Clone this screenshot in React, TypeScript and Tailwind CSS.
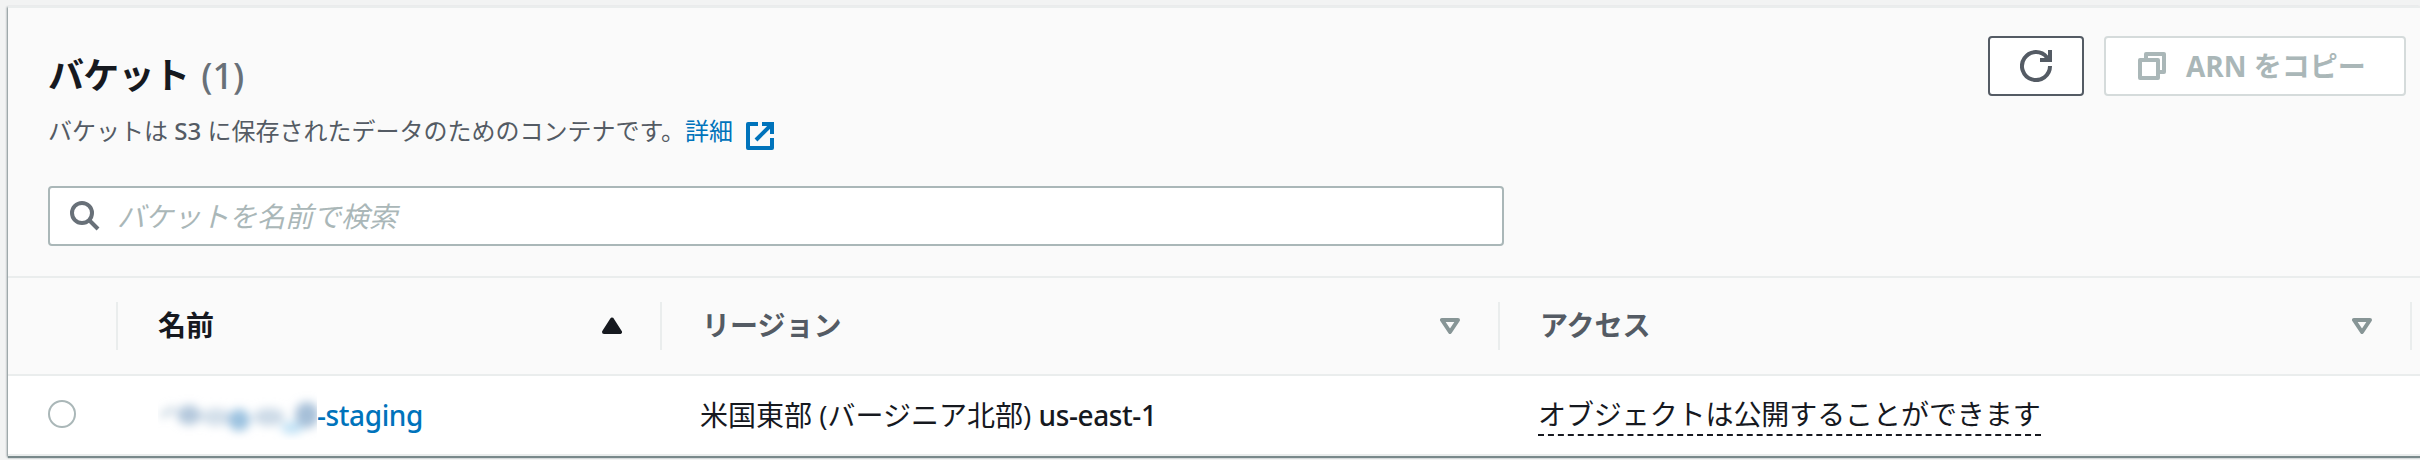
const FONT = "font-['Open_Sans','Noto_Sans_CJK_JP',sans-serif]";

function RefreshIcon() {
  return (
    <svg width="32" height="32" viewBox="0 0 32 32" fill="none" stroke="#545b64" strokeWidth="4">
      <path d="M30 16A14 14 0 1 1 27 7.4L29 10" />
      <path d="M20 10H30V0" />
    </svg>
  );
}

function CopyIcon() {
  return (
    <svg width="28" height="28" viewBox="0 0 28 28" fill="none" stroke="#aab7b8" strokeWidth="4" strokeLinejoin="round">
      <path d="M2 8H20V26H2Z" />
      <path d="M8 6V2H26V20H21" />
    </svg>
  );
}

function ExternalIcon() {
  return (
    <svg width="28" height="28" viewBox="0 0 28 28" fill="none" stroke="#0073bb" strokeWidth="4">
      <path d="M12 2H2V26H26V16" strokeLinejoin="round" />
      <path d="M16 2H26V12" />
      <path d="M10 18L25 3" />
    </svg>
  );
}

function SearchIcon() {
  return (
    <svg width="30" height="30" viewBox="0 0 30 30" fill="none" stroke="#687078" strokeWidth="4">
      <circle cx="12" cy="12" r="10" />
      <path d="M19 19L28 28" />
    </svg>
  );
}

function SortAsc() {
  return (
    <svg width="20" height="20" viewBox="0 0 20 20">
      <path d="M10 3.5L18 16H2Z" fill="#16191f" stroke="#16191f" strokeWidth="4" strokeLinejoin="round" />
    </svg>
  );
}

function SortNone() {
  return (
    <svg width="20" height="16" viewBox="0 0 20 16">
      <path d="M2 2H18L10 14Z" fill="none" stroke="#879596" strokeWidth="4" strokeLinejoin="round" />
    </svg>
  );
}

function HiddenName() {
  return (
    <svg width="159" height="50" viewBox="0 0 159 50">
      <defs>
        <filter id="soft" x="-20%" y="-50%" width="140%" height="200%">
          <feGaussianBlur stdDeviation="5" />
        </filter>
      </defs>
      <g filter="url(#soft)">
        <path d="M3 26L17 18" stroke="#c3d2df" strokeWidth="5" />
        <ellipse cx="31" cy="25" rx="12" ry="10" fill="#b4c8dc" />
        <ellipse cx="58" cy="27" rx="15" ry="9" fill="#d3dfea" />
        <ellipse cx="81" cy="30" rx="11" ry="11" fill="#9cc2e0" />
        <ellipse cx="111" cy="27" rx="16" ry="9" fill="#ccdae7" />
        <ellipse cx="134" cy="38" rx="11" ry="6" fill="#bfe1f5" />
        <ellipse cx="149" cy="25" rx="12" ry="13" fill="#a6bfd8" />
      </g>
    </svg>
  );
}

export default function App() {
  return (
    <div className={`flex h-[460px] w-[2420px] flex-col overflow-hidden bg-[#f2f3f3] pt-[6px] pl-2 text-[28px] text-[#16191f] ${FONT}`}>
      <main className="flex h-[450px] flex-col border-y-2 border-[#eaeded] bg-white shadow-[0_2px_1px_0_#79898b,-1px_1px_2px_0_rgba(0,28,36,0.45)]">
        <header className="flex h-[268px] shrink-0 justify-between bg-[#fafafa] pl-10">
          <div className="flex flex-col">
            <h1 className="mt-[43px] flex h-[50px] items-center gap-[12px] text-[36px] leading-[50px] font-bold">
              <span className="tracking-[-0.7px]">バケット</span>
              <span className="font-['Noto_Sans'] text-[36px] font-medium text-[#687078]">(1)</span>
            </h1>
            <p className="mt-[12px] flex h-[36px] items-center text-[24px] leading-[36px] whitespace-pre text-[#545b64]">
              <span>バケットは <span className="font-['Noto_Sans'] font-medium">S3</span> に保存されたデータのためのコンテナです。</span>
              <a className="text-[#0073bb]">詳細</a>
              <span className="mt-[9px] ml-[13px]"><ExternalIcon /></span>
            </p>
            <div className="mt-[37px] flex h-[60px] w-[1456px] items-center rounded-[4px] border-2 border-[#aab7b8] bg-white pl-5">
              <SearchIcon />
              <span className="ml-[17px] leading-[40px] text-[#aab7b8] italic">バケットを名前で検索</span>
            </div>
          </div>
          <div className="flex gap-5 pt-7 pr-[14px]">
            <button className="flex h-[60px] w-24 items-center justify-center rounded-[4px] border-2 border-[#545b64] bg-white">
              <RefreshIcon />
            </button>
            <button className="flex h-[60px] w-[302px] items-center rounded-[4px] border-2 border-[#d5dbdb] bg-white pl-8 font-bold text-[#aab7b8]">
              <CopyIcon />
              <span className="ml-5 leading-[40px] whitespace-nowrap">ARN をコピー</span>
            </button>
          </div>
        </header>
        <div className="flex h-[100px] shrink-0 items-center border-y-2 border-[#eaeded] bg-[#fafafa] font-bold">
          <div className="h-12 w-[110px] border-r-2 border-[#eaeded]" />
          <div className="flex h-12 w-[544px] items-center justify-between border-r-2 border-[#eaeded] pr-[38px] pl-10">
            <span className="pb-[2px]">名前</span>
            <SortAsc />
          </div>
          <div className="flex h-12 w-[838px] items-center justify-between border-r-2 border-[#eaeded] pr-[38px] pl-10 text-[#545b64]">
            <span className="pb-[2px]">リージョン</span>
            <SortNone />
          </div>
          <div className="flex h-12 w-[912px] items-center justify-between border-r-2 border-[#eaeded] pr-[38px] pl-10 text-[#545b64]">
            <span className="pb-[2px]">アクセス</span>
            <SortNone />
          </div>
        </div>
        <div className="flex h-[78px] shrink-0 items-center">
          <div className="w-[110px] pb-[2px] pl-10">
            <div className="h-7 w-7 rounded-full border-2 border-[#aab7b8] bg-white" />
          </div>
          <div className="flex w-[544px] items-center pl-10 text-[#0073bb]">
            <HiddenName />
            <span className="font-['Noto_Sans'] font-medium tracking-[-0.4px]">-staging</span>
          </div>
          <div className="w-[838px] pl-[38px] whitespace-nowrap">
            米国東部 (バージニア北部) <span className="font-['Noto_Sans'] font-medium tracking-[-0.4px]">us-east-1</span>
          </div>
          <div className="pl-[38px]">
            <span className="block border-b-2 border-dashed border-[#16191f] leading-[40px] tracking-[-0.08px] whitespace-nowrap">オブジェクトは公開することができます</span>
          </div>
        </div>
      </main>
    </div>
  );
}
